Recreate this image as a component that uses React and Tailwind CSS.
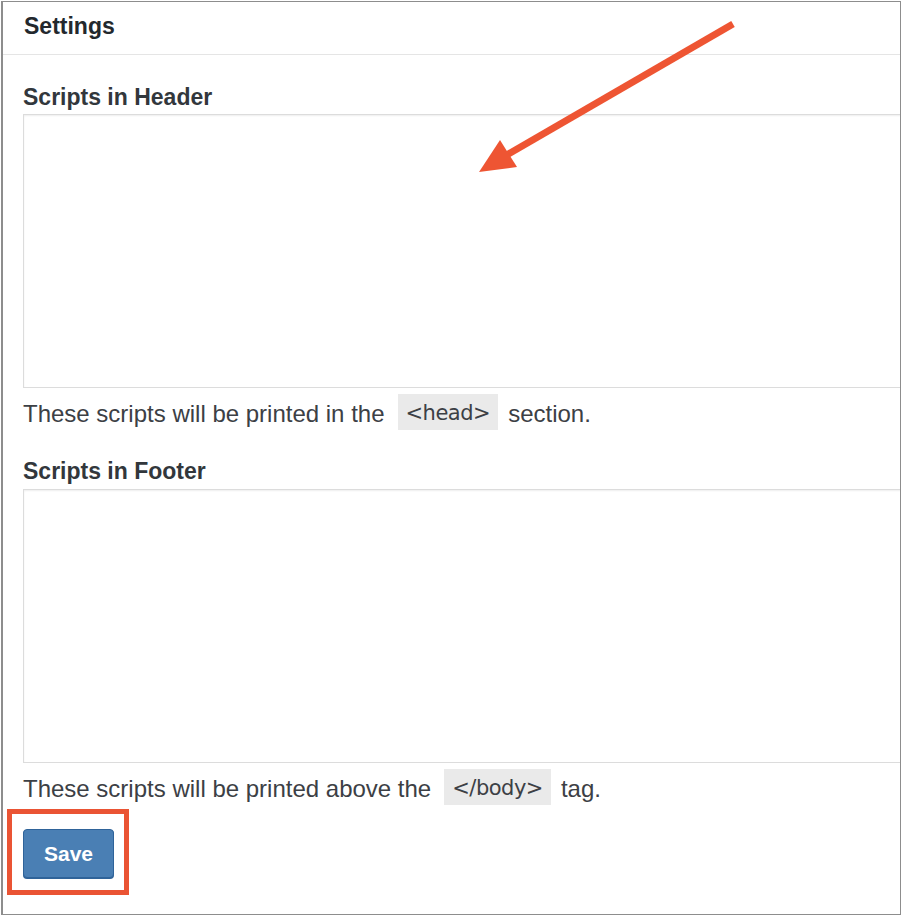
const codeFont = { fontFamily: '"DejaVu Sans", "Open Sans", sans-serif', letterSpacing: "-0.5px" };

function Hint({ before, code, after }) {
  return (
    <p className="mt-[14px] h-6 flex items-center text-[24px] text-[#3c4045] whitespace-nowrap">
      <span>{before}</span>
      <code className="ml-[13px] mr-[10px] h-[36px] -mt-[4px] pt-[4px] px-[8px] flex items-center bg-[#eaeaea] text-[#3c4045] text-[21px]" style={codeFont}>
        {code}
      </code>
      <span>{after}</span>
    </p>
  );
}

export default function App() {
  return (
    <div
      className="relative w-[902px] h-[917px] bg-white pt-[1px] pl-[1px]"
      style={{ fontFamily: '"Liberation Sans", Arial, sans-serif' }}
    >
      <div className="w-[900px] h-[914px] border border-[#8d8d8d] border-l-2 overflow-hidden bg-white">
        {/* Card header */}
        <div className="h-[53px] border-b border-[#e5e5e5] px-[21px] flex items-center">
          <h2 className="text-[23px] font-bold text-[#23282d] leading-6 -mt-[5px]">Settings</h2>
        </div>

        <div className="pl-[20px] pt-[30px]">
          <label className="block text-[23px] font-bold text-[#32373c] leading-6">Scripts in Header</label>
          <textarea className="mt-[5px] block w-[900px] h-[274px] border border-[#dcdcdc] shadow-[inset_0_1px_2px_rgba(0,0,0,0.07)] resize-none outline-none" />
          <Hint before="These scripts will be printed in the" code="<head>" after="section." />

          <label className="block mt-[33px] text-[23px] font-bold text-[#32373c] leading-6">Scripts in Footer</label>
          <textarea className="mt-[6px] block w-[900px] h-[274px] border border-[#dcdcdc] shadow-[inset_0_1px_2px_rgba(0,0,0,0.07)] resize-none outline-none" />
          <Hint before="These scripts will be printed above the" code="</body>" after="tag." />

          <button className="mt-[28px] w-[91px] h-[49px] rounded-[4px] bg-[#4a7fb4] border border-[#2f6399] shadow-[0_1px_0_#2f6399] text-white text-[21px] font-bold">
            Save
          </button>
        </div>
      </div>

      {/* Annotation: red box around Save */}
      <div className="absolute left-[7px] top-[809px] w-[122px] h-[86px] border-[5px] border-[#ea5434]" />

      {/* Annotation: arrow */}
      <svg className="absolute left-0 top-0 pointer-events-none" width="902" height="917">
        <line x1="733" y1="24" x2="505" y2="156" stroke="#ee5533" strokeWidth="7" />
        <polygon points="479,172 500,140 517,167" fill="#ee5533" />
      </svg>
    </div>
  );
}
